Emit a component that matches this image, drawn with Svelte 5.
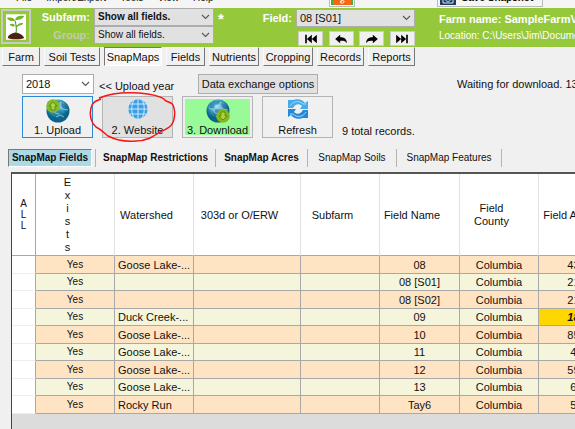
<script>
  const menus = ['File', 'Import/Export', 'Tools', 'View', 'Help'];
  const tabs = [
    ['Farm', 38], ['Soil Tests', 56], ['SnapMaps', 58], ['Fields', 39],
    ['Nutrients', 50], ['Cropping', 50], ['Records', 47], ['Reports', 47]
  ];
  const views = [
    ['SnapMap Fields', 84, true], ['SnapMap Restrictions', 120, true], ['SnapMap Acres', 92, true],
    ['SnapMap Soils', 89, false], ['SnapMap Features', 105, false]
  ];
  const columns = [
    ['A L L', 24], ['E x i s t s', 79], ['Watershed', 79], ['303d or O/ERW', 107],
    ['Subfarm', 79], ['Field Name', 80], ['Field County', 79], ['Field Acres', 79]
  ];
  const rows = [
    ['Goose Lake-...', '08', '43.4'], ['', '08 [S01]', '21.7'], ['', '08 [S02]', '21.7'],
    ['Duck Creek-...', '09', '18.2'], ['Goose Lake-...', '10', '85.1'], ['Goose Lake-...', '11', '4.6'],
    ['Goose Lake-...', '12', '59.3'], ['Goose Lake-...', '13', '6.2'], ['Rocky Run', 'Tay6', '5.1']
  ];
  const arrows = [
    ['First field', 'M1 1h2v10H1zM9 1v10L3 6zM15 1v10L9 6z'],
    ['Previous field', 'M7 1v3c5 0 8 2 8 7-2-3-4-3-8-3v3L1 6z'],
    ['Next field', 'M9 1v3c-5 0-8 2-8 7 2-3 4-3 8-3v3l6-5z'],
    ['Last field', 'M13 1h2v10h-2zM7 1v10l6-5zM1 1v10l6-5z']
  ];
</script>

{#snippet chevron()}
  <svg class="chevron" width="9" height="6" viewBox="0 0 9 6" aria-hidden="true"><path d="M1 1l3.5 3.5L8 1" fill="none" stroke="#555" stroke-width="1.1" /></svg>
{/snippet}

{#snippet earth(id)}
  <defs>
    <radialGradient {id} cx="45%" cy="30%"><stop offset="0" stop-color="#b4e4f4" /><stop offset=".5" stop-color="#4fabd0" /><stop offset="1" stop-color="#0a6489" /></radialGradient>
  </defs>
  <circle cx="12" cy="12" r="11.5" fill="url(#{id})" />
  <path d="M4 5l4-3 6 0-1 3-4 1-1 3-4 0zM15 4l5 2 2 4-3 1-3-3zM10 10l5 1 3 4-3 2-1 5-4-5-3-3z" fill="#176e91" opacity=".5" />
  <path d="M3 9l5 2 1 3 4 1M15 3l-2 4 4 3 5 1M10 18l4-2 4 2" fill="none" stroke="#93d5eb" stroke-width=".8" />
{/snippet}

<div class="app">
  <nav class="menubar">
    {#each menus as m}<a href="#menu">{m}</a>{/each}
    <button class="orange" aria-label="Help tool">
      <svg width="22" height="6" viewBox="0 0 22 6"><path d="M0 0h22v6H0z" fill="#f26a16" /><path d="M0 0h2v6H0zM20 0h2v6h-2z" fill="#45b13d" /><path d="M9 0c0 2 5 1 4 3s-4 1-4 0l2-1" fill="none" stroke="#fff" /></svg>
    </button>
    <button class="snapshot">
      <svg width="16" height="5" viewBox="0 0 16 5"><path d="M0 0h16v5H0z" fill="#1d3d62" /><path d="M3 0v3h10V0M6 0c0 2 4 2 4 0" fill="none" stroke="#d4e2ee" /></svg>
      <span>Save Snapshot</span>
    </button>
  </nav>

  <header>
    <button class="plant" aria-label="Farm overview">
      <svg width="20" height="26" viewBox="0 0 22 28">
        <path d="M0 0h22v28H0z" fill="#fff" />
        <path d="M2 26c0-3 4-5 8-6 4 0 9 3 10 6-3 2-15 2-18 0z" fill="#4b2113" />
        <path d="M11 21c1-5 0-10-1-14M11 14l4-3" fill="none" stroke="#5d9a23" stroke-width="1.2" />
        <path d="M10 7C7 8 2 7 1 4c4-1 8 0 9 3zM10 6c1-4 5-5 10-4-1 3-6 5-10 4zM10 13c-3 1-5 0-6-2 3-1 5-1 6 2zM13 12c1-2 3-3 6-2-1 2-3 3-6 2z" fill="#72b62c" />
      </svg>
    </button>
    <div class="filters">
      <label for="subfarm">Subfarm:</label>
      <div class="combo"><select id="subfarm" class="strong"><option>Show all fields.</option></select>{@render chevron()}</div>
      <label for="group" class="dim">Group:</label>
      <div class="combo"><select id="group"><option>Show all fields.</option></select>{@render chevron()}</div>
    </div>
    <span class="star">*</span>
    <label class="fieldlabel" for="field">Field:</label>
    <div class="fieldpick">
      <div class="combo"><select id="field"><option>08 [S01]</option></select>{@render chevron()}</div>
      <div class="arrows">
        {#each arrows as [name, d]}
          <button aria-label={name}><svg width="14" height="10" viewBox="0 0 16 12"><path {d} /></svg></button>
        {/each}
      </div>
    </div>
    <div class="farm"><strong>Farm name: SampleFarmV</strong><span>Location: C:\Users\Jim\Documents</span></div>
  </header>

  <nav class="tabs">
    {#each tabs as [name, w]}<button class:current={name === 'SnapMaps'} style="width:{w}px">{name}</button>{/each}
  </nav>

  <section class="tools">
    <div class="line">
      <div class="combo year"><select id="year"><option>2018</option></select>{@render chevron()}</div>
      <label for="year">&lt;&lt; Upload year</label>
      <button class="exchange">Data exchange options</button>
      <span class="waiting">Waiting for download. 13:33</span>
    </div>
    <div class="line actions">
      <button class="focus">
        <svg width="24" height="24" viewBox="0 0 24 24">{@render earth('globe-up')}<circle cx="7" cy="7" r="6.8" fill="#86b92a" /><path d="M7 3l4 4H9v4H5V7H3z" fill="#a5d542" stroke="#467b16" stroke-width=".7" /></svg>
        <span>1. Upload</span>
      </button>
      <div class="circled">
        <button class="grey">
          <svg width="20" height="20" viewBox="0 0 20 20"><circle cx="10" cy="10" r="9.7" fill="#3c9fe4" /><path d="M10 0v20M0 10h20M2 5h16M2 15h16M6 1c-3 5-3 13 0 18M14 1c3 5 3 13 0 18" fill="none" stroke="#c9eaff" stroke-width="1" /></svg>
          <span>2. Website</span>
        </button>
        <svg class="mark" width="90" height="54" viewBox="0 0 90 54"><path d="M11 8C23 3 37 2 51 3c11 1 21 3 25 6 1 3 8 3 9 6 2 5 2 10 1 14-1 7-7 10-14 13-6 4-13 9-24 9-10 1-20-1-28-5-4-3-6-6-12-9-5-4-7-12-5-19 1-6 5-7 10-9" fill="none" stroke="#f51616" stroke-width="1.5" /></svg>
      </div>
      <button class="green">
        <svg width="24" height="24" viewBox="0 0 24 24">{@render earth('globe-down')}<circle cx="17" cy="17" r="6.8" fill="#86b51c" /><path d="M15 13h4v4h2l-4 4-4-4h2z" fill="#afd438" stroke="#467b16" stroke-width=".7" /></svg>
        <span>3. Download</span>
      </button>
      <button>
        <svg width="20" height="20" viewBox="0 0 20 20"><path d="M0 1h5c5-2 10 0 12 3l3-2v8h-8l2-3c-3-3-7-2-9 2H0z" fill="#48aae9" /><path d="M20 19h-5c-5 2-10 0-12-3l-3 2v-8h8l-2 3c3 3 7 2 9-2h5z" fill="#2689d7" /><path d="M2 7c3-5 9-6 13-2l3 0M18 13c-3 5-9 6-13 2H2" fill="none" stroke="#9ddafa" /></svg>
        <span>Refresh</span>
      </button>
      <span class="total">9 total records.</span>
    </div>
  </section>

  <nav class="views">
    {#each views as [name, w, bold], i}
      <div class="view" class:first={i === 0} style="width:{w}px"><button class:bold>{name}</button></div>
    {/each}
  </nav>

  <main>
    <table>
      <colgroup>{#each columns as [, w]}<col style="width:{w}px" />{/each}</colgroup>
      <thead><tr>
        {#each columns as [name], i}<th scope="col" class:all={i === 0} class:stack={i === 1} class:county={i === 6}><span>{name}</span></th>{/each}
      </tr></thead>
      <tbody>
        {#each rows as [shed, name, acres]}
          <tr><td class="blank"></td><td class="yes">Yes</td><td class="left">{shed}</td><td></td><td></td><td>{name}</td><td>Columbia</td><td class:gold={name === '09'}>{acres}</td></tr>
        {/each}
      </tbody>
    </table>
  </main>
</div>

<style>
  .app { display: flex; flex-direction: column; min-height: 100vh; overflow: hidden; background: #f0f0f0; color: #111; font: 11px/14px "Liberation Sans", Arial, sans-serif; white-space: nowrap; }
  button, select { font: inherit; color: inherit; box-sizing: border-box; margin: 0; padding: 0; border-radius: 0; }
  svg { display: block; flex: none; }

  .menubar { display: flex; align-items: flex-end; height: 8px; padding-left: 16px; gap: 14px; background: #f5f5f5; overflow: hidden; font-size: 10px; }
  .menubar > * { flex: none; }
  .menubar a { color: #111; text-decoration: none; margin-bottom: 3px; }
  .orange { margin-left: 101px; margin-bottom: 1px; padding: 0 1px 1px; border: 1px solid #bbb; border-top: 0; background: #fff; height: 8px; }
  .snapshot { display: flex; align-items: flex-end; gap: 6px; width: 106px; height: 7px; margin: 0 0 1px 68px; padding: 0 2px 1px; border: 1px solid #bbb; border-top: 0; background: #f5f5f5; font-weight: bold; }

  header { display: flex; align-items: flex-start; height: 39px; background: #96c83c; color: #fff; }
  header > * { flex: none; }
  .plant { display: flex; align-items: center; justify-content: center; width: 30px; height: 35px; margin: 1px 0 0 1px; background: #96c83c; border: 2px solid #c9c9c9; }
  .filters { display: grid; grid-template-columns: 59px 120px; gap: 0 4px; }
  .filters label { text-align: right; font-weight: bold; line-height: 18px; }
  .filters select { font-size: 10px; }
  .filters .dim { color: #c3ccb2; }
  .combo { position: relative; height: 18px; color: #111; }
  select { appearance: none; display: block; width: 100%; height: 100%; padding: 0 3px; background: #e1e1e1; border: 1px solid #adadad; }
  .filters .strong { font-weight: bold; }
  .chevron { position: absolute; right: 4px; top: 50%; margin-top: -3px; pointer-events: none; }
  .star { width: 6px; margin-left: 4px; font-size: 15px; font-weight: bold; line-height: 22px; }
  .fieldlabel { width: 68px; text-align: right; font-weight: bold; line-height: 20px; }
  .fieldpick { width: 119px; margin: 1px 0 0 4px; }
  .arrows { display: flex; justify-content: space-between; padding: 4px 0 0 2px; }
  .arrows button { display: flex; align-items: center; justify-content: center; width: 25px; height: 15px; background: #f0f0f0; border: 1px solid #ccc; }
  .farm { display: flex; flex-direction: column; gap: 3px; margin: 4px 0 0 24px; }
  .farm span { font-size: 10px; }

  .tabs { display: flex; gap: 4px; padding: 0 2px; }
  .tabs button { flex: none; height: 19px; background: #f0f0f0; border: 1px solid #fafafa; border-right: 1px solid #777; border-bottom: 1px solid #777; }
  .tabs .current { background: #f8f8f8; border: 1px solid #777; border-right-color: #fff; border-bottom-color: #fff; }

  .tools { display: flex; flex-direction: column; gap: 2px; padding: 8px 0 0 22px; }
  .line { display: flex; align-items: center; }
  .year { flex: none; width: 72px; height: 20px; }
  .year select { background: #fff; }
  .line label { flex: none; width: 99px; margin-left: 5px; padding-top: 3px; box-sizing: border-box; }
  .exchange { flex: none; width: 120px; height: 20px; border: 1px solid #adadad; background: #e1e1e1; }
  .waiting { margin-left: 139px; }
  .actions { gap: 9px; }
  .actions button { display: flex; flex-direction: column; align-items: center; justify-content: space-between; flex: none; width: 71px; height: 42px; padding: 2px 0 0; border: 1px solid #b4b4b4; background: #f0f0f0; }
  .actions .focus { border-color: #2c87d6; }
  .actions .grey { background: #e1e1e1; }
  .actions .green { background: #98fb98; box-shadow: inset 0 0 0 2px #eee; }
  .circled { position: relative; }
  .mark { position: absolute; left: -14px; top: -6px; pointer-events: none; }
  .total { align-self: flex-end; }

  .views { display: flex; padding: 11px 8px 0; height: 18px; font-size: 10px; }
  .view { display: flex; flex: none; box-sizing: border-box; border-right: 1px solid #b4b4b4; }
  .view button { width: 100%; border: 0; background: none; }
  .view.first { box-sizing: content-box; padding-right: 3px; }
  .first button { background: #add8e6; border: 1px solid #777; border-right-color: #fff; border-bottom-color: #fff; }
  .bold { font-weight: bold; }

  main { flex: 1; margin: 5px 0 0 11px; overflow: hidden; background: #dcdcdc; border-left: 1px solid #444; border-top: 2px solid #555; }
  table { width: 606px; table-layout: fixed; border-collapse: separate; border-spacing: 0; }
  th, td { box-sizing: border-box; padding: 0; text-align: center; font-weight: normal; border-right: 1px solid #a8a8a8; border-bottom: 1px solid #a8a8a8; overflow: hidden; }
  th { height: 82px; padding-right: 15px; background: #fff; border-right-color: #e2e2e2; white-space: normal; }
  th span { display: inline-block; }
  .all { padding-right: 0; font-size: 10px; line-height: 11px; }
  .all, .blank { border-right-color: #a8a8a8; }
  .all span, .stack span { width: 8px; }
  .stack { line-height: 13px; }
  .county span { width: 40px; line-height: 13px; }
  td { height: 17px; line-height: 14px; background: #f5f5dc; }
  tr:nth-child(odd) td { height: 18px; background: #ffe4c4; }
  tbody tr td.blank { background: #fff; border-bottom-color: #eee; }
  .yes { font-size: 10px; }
  .left { padding-left: 3px; text-align: left; }
  tbody tr td.gold { background: #ffd700; font-weight: bold; font-style: italic; }
</style>
